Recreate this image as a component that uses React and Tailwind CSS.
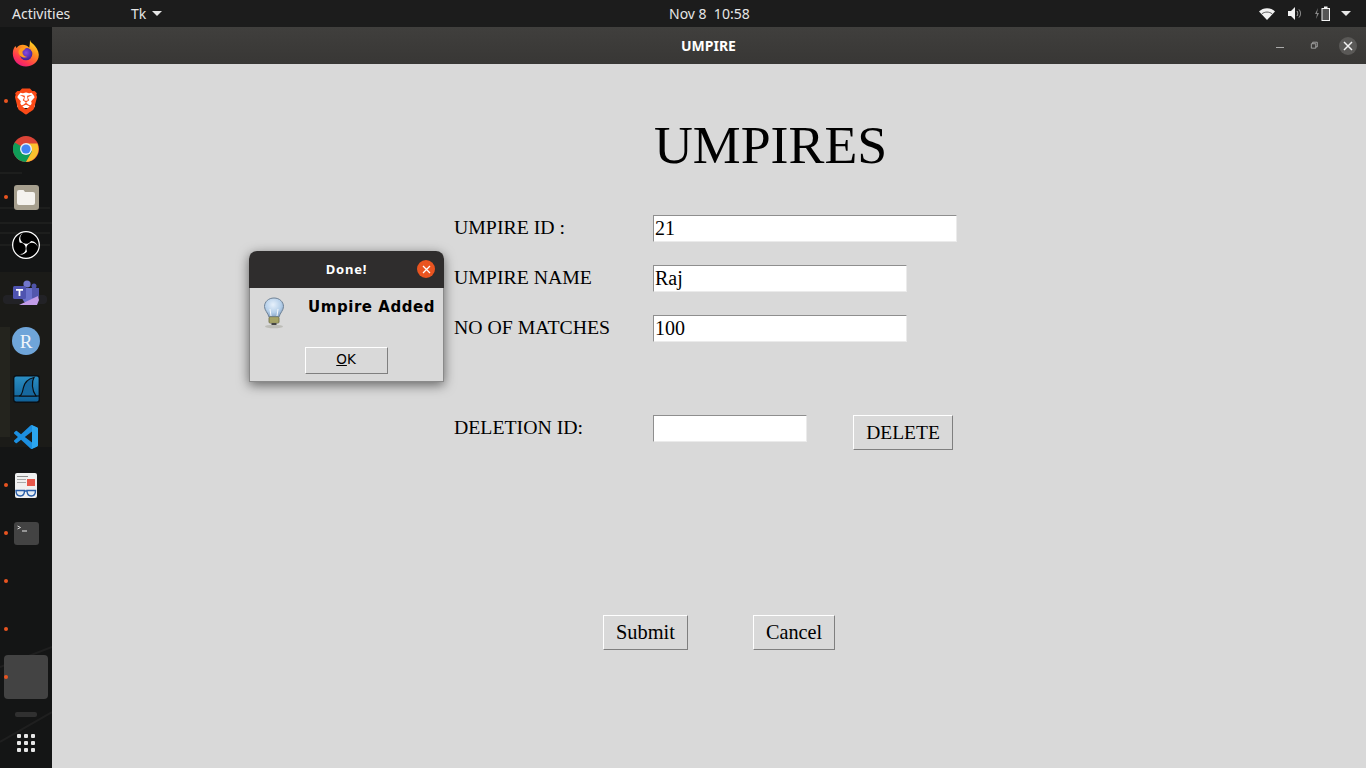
import React from "react";
import { SiBrave, SiObsstudio } from "react-icons/si";

const Firefox = () => (
  <svg width="28" height="28" viewBox="0 0 28 28">
    <defs>
      <linearGradient id="ff1" x1="0.8" y1="0" x2="0.2" y2="1">
        <stop offset="0" stopColor="#ffe226" />
        <stop offset="0.4" stopColor="#ff8a1f" />
        <stop offset="0.75" stopColor="#ff3750" />
        <stop offset="1" stopColor="#e31587" />
      </linearGradient>
      <radialGradient id="ff2" cx="0.5" cy="0.4" r="0.6">
        <stop offset="0" stopColor="#8a4ae0" />
        <stop offset="1" stopColor="#3a1f95" />
      </radialGradient>
    </defs>
    <path d="M18 1c.5 2.500 3 3.500 5 6 3 3.500 4.500 8 3.500 11.500C25 24 20 27.500 14 27.500 6.500 27.500 .8 21.500.8 14.500.8 11 2 8.500 3.500 7c.3 1 .7 1.600 1.200 2 1.300-2 3.500-3.200 6-3.200 2.500 0 5 1 6.500 3 .6-2.800.8-5.500.8-7.800z" fill="url(#ff1)" />
    <circle cx="14" cy="15" r="6.300" fill="url(#ff2)" />
    <path d="M7 11c2-3 6-3.500 9-2.500-2 .5-3.500 1.500-4 2.800-1 .3-1.500 1-1.500 2 0 2.500 2 4.700 5 4.700-4 1.500-8.500-.5-9-4.500-.1-.8 0-1.700.5-2.500z" fill="#ff9a1f" />
  </svg>
);

const Brave = () => (
  <div className="relative w-[26px] h-[29px] flex items-center justify-center">
    <div className="absolute left-[4px] right-[4px] top-[5px] h-[16px] bg-white rounded-[3px]" />
    <SiBrave className="relative" size={29} color="#fb4a17" />
  </div>
);

const Chrome = () => (
  <svg width="26" height="26" viewBox="0 0 26 26">
    <circle cx="13" cy="13" r="13" fill="#db4437" />
    <path d="M13 13L1.700 6.500A13 13 0 0 0 13 26l6.500-11.300z" fill="#0f9d58" />
    <path d="M13 7.500h11.300A13 13 0 0 1 13 26l6-10.500z" fill="#fbc02d" />
    <circle cx="13" cy="13" r="6" fill="#e8eef7" />
    <circle cx="13" cy="13" r="4.600" fill="#4285f4" />
  </svg>
);

const Files = () => (
  <div className="w-[25px] h-[25px] rounded-[3px] bg-[#a69f8e] flex items-center justify-center">
    <svg width="18" height="15" viewBox="0 0 18 15">
      <path d="M0 2a2 2 0 0 1 2-2h4.500l1.500 2h8a2 2 0 0 1 2 2v9a2 2 0 0 1-2 2H2a2 2 0 0 1-2-2z" fill="#f4f2ee" />
    </svg>
  </div>
);

const Obs = () => (
  <div className="w-[28px] h-[28px] rounded-full bg-black flex items-center justify-center">
    <SiObsstudio size={28} color="#ffffff" />
  </div>
);

const Teams = () => (
  <svg width="28" height="28" viewBox="0 0 28 28">
    <circle cx="15" cy="5" r="3.600" fill="#7277cc" />
    <circle cx="22" cy="7" r="2.500" fill="#4f54a8" />
    <path d="M10 9h12v9a6 6 0 0 1-12 0z" fill="#6a71cc" />
    <path d="M20 9h7v8a4 4 0 0 1-7 2z" fill="#5257ad" />
    <rect x="1" y="7" width="13" height="13" rx="1.500" fill="#4f54b0" />
    <path d="M4 10h7v1.700H8.400V17H6.600v-5.300H4z" fill="#fff" />
    <path d="M7 26l19-9 1 4-2 5H8z" fill="#c29ce8" />
  </svg>
);

const RLogo = () => (
  <div className="w-[28px] h-[28px] rounded-full bg-[#6fa5d9] flex items-center justify-center text-[#eef4fa] text-[19px] leading-none font-['Liberation_Serif',serif]">
    R
  </div>
);

const Wireshark = () => (
  <svg width="27" height="28" viewBox="0 0 27 28">
    <defs>
      <linearGradient id="ws" x1="0" y1="0" x2="0" y2="1">
        <stop offset="0" stopColor="#2b8fc4" />
        <stop offset="1" stopColor="#0f5f96" />
      </linearGradient>
    </defs>
    <rect x="0.700" y="0.700" width="25.600" height="26.600" rx="2.500" fill="url(#ws)" stroke="#0a0f14" strokeWidth="1.400" />
    <path d="M1 21h26" stroke="#0a0f14" strokeWidth="1.200" />
    <path d="M6 21c3 0 3.500-4 4.300-8C11.300 8 15 3.800 21 2.500c-2.500 4-2.300 13 2 18.500z" fill="#16689f" stroke="#0a0f14" strokeWidth="1.200" />
  </svg>
);

const VsCode = () => (
  <svg width="24" height="24" viewBox="0 0 24 24">
    <path d="M23.150 2.587L18.210.210a1.494 1.494 0 0 0-1.705.290l-9.460 8.630-4.120-3.128a.999.999 0 0 0-1.276.057L.327 7.261A1 1 0 0 0 .326 8.740L3.899 12 .326 15.260a1 1 0 0 0 .001 1.479L1.650 17.940a.999.999 0 0 0 1.276.057l4.120-3.128 9.460 8.630a1.492 1.492 0 0 0 1.704.290l4.942-2.377A1.500 1.500 0 0 0 24 20.060V3.939a1.500 1.500 0 0 0-.850-1.352zm-5.146 14.861L10.826 12l7.178-5.448v10.896z" fill="#1c8fe0" />
    <path d="M16.500.500a1.494 1.494 0 0 1 1.710-.290l4.940 2.377A1.500 1.500 0 0 1 24 3.939V20.060a1.500 1.500 0 0 1-.850 1.352l-4.940 2.377a1.492 1.492 0 0 1-1.710-.290c.700.600 1.500.200 1.500-.700V1.200c0-.900-.800-1.300-1.500-.700z" fill="#2ba6f0" />
  </svg>
);

const News = () => (
  <div className="w-[22px] h-[25px] rounded-[2px] bg-[#f0f0f0] relative overflow-hidden">
    <div className="absolute left-[2px] top-[3px] w-[11px] h-[1px] bg-[#8a8a8a]" />
    <div className="absolute left-[2px] top-[6px] w-[9px] h-[1px] bg-[#aaa]" />
    <div className="absolute left-[2px] top-[9px] w-[9px] h-[1px] bg-[#aaa]" />
    <div className="absolute right-[2px] top-[6px] w-[8px] h-[7px] bg-[#e8574a]" />
    <svg className="absolute left-[0px] bottom-[1px]" width="22" height="9" viewBox="0 0 22 9">
      <path d="M1 2.500h8.500c0 3-1 5.500-4.200 5.500S1 5.500 1 2.500zM12 2.500h8.500c0 3-1 5.500-4.200 5.500S12 5.500 12 2.500z" fill="#e4ecf4" stroke="#2a5ea8" strokeWidth="1.400" />
      <path d="M9 3h3" stroke="#2a5ea8" strokeWidth="1.400" />
    </svg>
  </div>
);

const Terminal = () => (
  <div className="w-[25px] h-[23px] rounded-[3px] bg-[#434343] relative">
    <svg className="absolute left-[3px] top-[3px]" width="12" height="8" viewBox="0 0 12 8">
      <path d="M0.500 1l3 1.500-3 1.500" fill="none" stroke="#e8e8e8" strokeWidth="0.900" />
      <path d="M5 6h5" stroke="#e8e8e8" strokeWidth="1" />
    </svg>
  </div>
);

const docks = [
  { icon: <Firefox /> },
  { icon: <Brave />, dot: true },
  { icon: <Chrome /> },
  { icon: <Files />, dot: true },
  { icon: <Obs /> },
  { icon: <Teams /> },
  { icon: <RLogo /> },
  { icon: <Wireshark /> },
  { icon: <VsCode /> },
  { icon: <News />, dot: true },
  { icon: <Terminal />, dot: true },
  { dot: true },
  { dot: true },
  { active: true, dot: true },
];

const Dock = () => (
  <aside className="relative w-[52px] shrink-0 bg-[#141515] overflow-hidden">
    <svg className="absolute inset-0" width="52" height="741" viewBox="0 0 52 741">
      <path d="M0 146h22M0 181h50M0 196h52M0 206h50M0 218h50" stroke="#3a3a36" strokeWidth="1" opacity="0.500" />
      <rect x="0" y="245" width="52" height="175" fill="#1f1f1b" opacity="0.600" />
      <rect x="0" y="300" width="10" height="110" fill="#3a3a30" opacity="0.300" />
      <rect x="3" y="268" width="44" height="9" rx="4" fill="#35354a" opacity="0.300" />
      <path d="M0 640L52 620M0 715L52 685" stroke="#2a2a2a" strokeWidth="2" opacity="0.500" />
    </svg>
    <div className="relative flex flex-col pt-[2px]">
      {docks.map((d, i) => (
        <div key={i} className="relative h-[48px] flex items-center justify-center">
          {d.active && <div className="w-[44px] h-[44px] rounded-[4px] bg-[#434343]" />}
          {d.icon}
          {d.dot && <div className="absolute left-[4px] top-[22px] w-[4px] h-[4px] rounded-full bg-[#e95420]" />}
        </div>
      ))}
      <div className="mx-auto mt-[11px] w-[22px] h-[5px] rounded-[2px] bg-[#303030]" />
      <div className="mx-auto mt-[17px] grid grid-cols-3 gap-[3px]">
        {Array.from({ length: 9 }).map((_, i) => (
          <div key={i} className="w-[4px] h-[4px] rounded-[1px] bg-[#e6e6e6]" />
        ))}
      </div>
    </div>
  </aside>
);

const TopBar = () => (
  <header className="h-[27px] shrink-0 bg-[#1c1c1c] text-[#e6e6e6] text-[14px] font-['Noto_Sans',sans-serif] flex items-center relative">
    <span className="ml-[12px] w-[119px]">Activities</span>
    <span>Tk</span>
    <svg className="ml-[6px]" width="10" height="5" viewBox="0 0 10 5"><path d="M0 0h10L5 5z" fill="#e6e6e6" /></svg>
    <span className="absolute left-[669px] top-[3px]">Nov 8&nbsp; 10:58</span>
    <div className="ml-auto mr-[15px] flex items-center">
      <svg width="16" height="12" viewBox="0 0 16 12">
        <path d="M0 3.500C4-1 12-1 16 3.500L8 12z" fill="#f2f2f2" />
        <path d="M2.800 5.800C6 3.500 10 3.500 13.200 5.800" fill="none" stroke="#1c1c1c" strokeWidth="0.700" />
      </svg>
      <svg className="ml-[13px]" width="15" height="13" viewBox="0 0 15 13">
        <path d="M0 4h3l4-4v13l-4-4H0z" fill="#f2f2f2" />
        <path d="M9 4c1 1.500 1 3.500 0 5M11 2.500c2 2.500 2 5.500 0 8" fill="none" stroke="#aaa" strokeWidth="1" />
      </svg>
      <svg className="ml-[12px]" width="16" height="15" viewBox="0 0 16 15">
        <path d="M3 2L0 8h2l-1 5 3-6H2z" fill="#888" />
        <rect x="7" y="2.500" width="7.500" height="12" fill="#555" stroke="#f2f2f2" />
        <rect x="9" y="0.500" width="3.500" height="2" fill="#f2f2f2" />
      </svg>
      <svg className="ml-[10px]" width="10" height="5" viewBox="0 0 10 5"><path d="M0 0h10L5 5z" fill="#e6e6e6" /></svg>
    </div>
  </header>
);

const WinTitle = () => (
  <div className="h-[37px] shrink-0 bg-gradient-to-b from-[#403f3d] to-[#383735] flex items-center relative text-white">
    <span className="absolute left-[629px] top-[10px] text-[14px] leading-[17px] font-bold font-['Noto_Sans',sans-serif]">UMPIRE</span>
    <div className="ml-auto flex items-center">
      <div className="w-[8px] h-[1px] bg-[#aaa] mt-[4px]" />
      <svg className="ml-[26px]" width="8" height="9" viewBox="0 0 9 9">
        <path d="M1.500 2.500h5v5h-5zM3 2.500V.8h5.200V6H6.500" fill="none" stroke="#aaa" strokeWidth="1" />
      </svg>
      <div className="ml-[21px] mr-[9px] w-[18px] h-[18px] rounded-full bg-[#5a5957] flex items-center justify-center">
        <svg width="10" height="10" viewBox="0 0 10 10"><path d="M1 1l8 8M9 1L1 9" stroke="#f2f2f2" strokeWidth="1.500" /></svg>
      </div>
    </div>
  </div>
);

const Input = ({ w, value }) => (
  <div className={`${w} h-[27px] bg-white border border-t-[#8e8e8e] border-l-[#8e8e8e] border-r-[#ebebeb] border-b-[#ebebeb] pl-[1px] text-[20px] leading-[24px] text-black`}>
    {value}
  </div>
);

const TkButton = ({ children, className }) => (
  <div className={`h-[35px] bg-[#d9d9d9] border border-t-white border-l-white border-r-[#7f7f7f] border-b-[#7f7f7f] text-black flex items-center justify-center ${className}`}>
    {children}
  </div>
);

const Row = ({ label, w, value, className = "" }) => (
  <div className={`flex ${className}`}>
    <div className="w-[199px] text-[19.8px] leading-[24px] text-black">{label}</div>
    <Input w={w} value={value} />
  </div>
);

const Bulb = () => (
  <svg width="24" height="32" viewBox="0 0 24 32">
    <defs>
      <radialGradient id="bulb" cx="0.45" cy="0.35" r="0.7">
        <stop offset="0" stopColor="#e6f0fb" />
        <stop offset="0.6" stopColor="#b5cfe9" />
        <stop offset="1" stopColor="#7e9cc0" />
      </radialGradient>
    </defs>
    <ellipse cx="12" cy="29.500" rx="9" ry="1.800" fill="#bdbdb8" />
    <path d="M12 1c5.500 0 9.500 3.800 9.500 8.500 0 3.800-3.500 6.500-4.500 10.500H7c-1-4-4.500-6.700-4.500-10.500C2.500 4.800 6.500 1 12 1z" fill="url(#bulb)" stroke="#6f8296" strokeWidth="1" />
    <path d="M9 19l-1-7M15 19l1-7" stroke="#f5f8fb" strokeWidth="1" />
    <rect x="7" y="20" width="10" height="6" rx="1" fill="#c4c07a" stroke="#66663f" strokeWidth="0.800" />
    <path d="M7 22h10M7 24h10" stroke="#77774a" strokeWidth="0.800" />
    <rect x="9.500" y="26" width="5" height="2" fill="#444" />
  </svg>
);

const Dialog = () => (
  <div className="absolute left-[249px] top-[251px] w-[195px] h-[131px] rounded-t-[8px] shadow-[0_3px_12px_rgba(0,0,0,0.55)] flex flex-col overflow-hidden">
    <div className="h-[37px] shrink-0 pt-[1px] bg-[#2f2d2d] flex items-center justify-center relative">
      <span className="text-white text-[13px] font-bold font-['Noto_Sans',sans-serif] tracking-[0.8px]">Done!</span>
      <div className="absolute right-[9px] top-[9px] w-[18px] h-[18px] rounded-full bg-[#e95420] flex items-center justify-center">
        <svg width="9" height="9" viewBox="0 0 9 9"><path d="M1 1l7 7M8 1L1 8" stroke="#fff" strokeWidth="1.300" /></svg>
      </div>
    </div>
    <div className="flex-1 bg-[#d9d9d9] border border-t-0 border-[#8a8a8a]">
      <div className="flex">
        <div className="ml-[12px] mt-[9px]"><Bulb /></div>
        <div className="ml-[22px] mt-[9px] text-[15px] leading-[20px] font-bold tracking-[0.55px] text-black font-['DejaVu_Sans',sans-serif] whitespace-nowrap">Umpire Added</div>
      </div>
      <div className="mt-[18px] flex justify-center">
        <div className="w-[83px] h-[27px] ml-[-1px] pb-[3px] bg-[#d9d9d9] border border-t-white border-l-white border-r-[#7f7f7f] border-b-[#7f7f7f] flex items-center justify-center text-[13.5px] text-black font-['DejaVu_Sans',sans-serif]">
          <span><span className="underline">O</span>K</span>
        </div>
      </div>
    </div>
  </div>
);

const Form = () => (
  <main className="flex-1 bg-[#d9d9d9] font-['Liberation_Serif',serif] pl-[402px]">
    <h1 className="ml-[200px] mt-[50px] text-[53.8px] leading-[62px] text-black">UMPIRES</h1>
    <div className="mt-[39px] flex flex-col gap-[23px]">
      <Row label="UMPIRE ID :" w="w-[304px]" value="21" />
      <Row label="UMPIRE NAME" w="w-[254px]" value="Raj" />
      <Row label="NO OF MATCHES" w="w-[254px]" value="100" />
    </div>
    <div className="mt-[73px] flex items-start">
      <Row label="DELETION ID:" w="w-[154px]" value="" />
      <TkButton className="ml-[46px] w-[100px] text-[19.5px]">DELETE</TkButton>
    </div>
    <div className="mt-[165px] ml-[149px] flex">
      <TkButton className="w-[85px] pb-[1px] text-[20.4px]">Submit</TkButton>
      <TkButton className="ml-[65px] w-[82px] pb-[1px] text-[20.2px]">Cancel</TkButton>
    </div>
  </main>
);

export default function App() {
  return (
    <div className="relative w-[1366px] h-[768px] flex flex-col overflow-hidden">
      <TopBar />
      <div className="flex flex-1 min-h-0">
        <Dock />
        <div className="flex-1 flex flex-col">
          <WinTitle />
          <Form />
        </div>
      </div>
      <Dialog />
    </div>
  );
}
